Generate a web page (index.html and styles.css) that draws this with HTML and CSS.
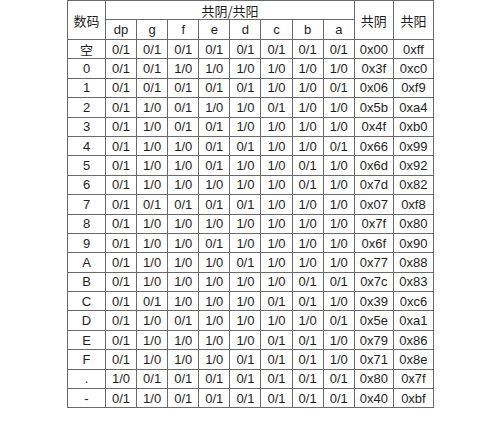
FILE: index.html
```
<!DOCTYPE html>
<html>
<head>
<meta charset="utf-8">
<link rel="stylesheet" href="styles.css">
</head>
<body>
<table class="seg">
<colgroup>
<col class="c-key"><col class="c-bit"><col class="c-bit"><col class="c-bit"><col class="c-bit"><col class="c-bit"><col class="c-bit"><col class="c-bit"><col class="c-bit"><col class="c-hex1"><col class="c-hex2">
</colgroup>
<thead>
<tr class="h1"><th rowspan="2">数码</th><th colspan="8">共阴/共阳</th><th rowspan="2">共阴</th><th rowspan="2">共阳</th></tr>
<tr class="h2"><th>dp</th><th>g</th><th>f</th><th>e</th><th>d</th><th>c</th><th>b</th><th>a</th></tr>
</thead>
<tbody>
<tr><td class="k">空</td><td>0/1</td><td>0/1</td><td>0/1</td><td>0/1</td><td>0/1</td><td>0/1</td><td>0/1</td><td>0/1</td><td>0x00</td><td>0xff</td></tr>
<tr><td>0</td><td>0/1</td><td>0/1</td><td>1/0</td><td>1/0</td><td>1/0</td><td>1/0</td><td>1/0</td><td>1/0</td><td>0x3f</td><td>0xc0</td></tr>
<tr><td>1</td><td>0/1</td><td>0/1</td><td>0/1</td><td>0/1</td><td>0/1</td><td>1/0</td><td>1/0</td><td>0/1</td><td>0x06</td><td>0xf9</td></tr>
<tr><td>2</td><td>0/1</td><td>1/0</td><td>0/1</td><td>1/0</td><td>1/0</td><td>0/1</td><td>1/0</td><td>1/0</td><td>0x5b</td><td>0xa4</td></tr>
<tr><td>3</td><td>0/1</td><td>1/0</td><td>0/1</td><td>0/1</td><td>1/0</td><td>1/0</td><td>1/0</td><td>1/0</td><td>0x4f</td><td>0xb0</td></tr>
<tr><td>4</td><td>0/1</td><td>1/0</td><td>1/0</td><td>0/1</td><td>0/1</td><td>1/0</td><td>1/0</td><td>0/1</td><td>0x66</td><td>0x99</td></tr>
<tr><td>5</td><td>0/1</td><td>1/0</td><td>1/0</td><td>0/1</td><td>1/0</td><td>1/0</td><td>0/1</td><td>1/0</td><td>0x6d</td><td>0x92</td></tr>
<tr><td>6</td><td>0/1</td><td>1/0</td><td>1/0</td><td>1/0</td><td>1/0</td><td>1/0</td><td>0/1</td><td>1/0</td><td>0x7d</td><td>0x82</td></tr>
<tr><td>7</td><td>0/1</td><td>0/1</td><td>0/1</td><td>0/1</td><td>0/1</td><td>1/0</td><td>1/0</td><td>1/0</td><td>0x07</td><td>0xf8</td></tr>
<tr><td>8</td><td>0/1</td><td>1/0</td><td>1/0</td><td>1/0</td><td>1/0</td><td>1/0</td><td>1/0</td><td>1/0</td><td>0x7f</td><td>0x80</td></tr>
<tr><td>9</td><td>0/1</td><td>1/0</td><td>1/0</td><td>0/1</td><td>1/0</td><td>1/0</td><td>1/0</td><td>1/0</td><td>0x6f</td><td>0x90</td></tr>
<tr><td>A</td><td>0/1</td><td>1/0</td><td>1/0</td><td>1/0</td><td>0/1</td><td>1/0</td><td>1/0</td><td>1/0</td><td>0x77</td><td>0x88</td></tr>
<tr><td>B</td><td>0/1</td><td>1/0</td><td>1/0</td><td>1/0</td><td>1/0</td><td>1/0</td><td>0/1</td><td>0/1</td><td>0x7c</td><td>0x83</td></tr>
<tr><td>C</td><td>0/1</td><td>0/1</td><td>1/0</td><td>1/0</td><td>1/0</td><td>0/1</td><td>0/1</td><td>1/0</td><td>0x39</td><td>0xc6</td></tr>
<tr><td>D</td><td>0/1</td><td>1/0</td><td>0/1</td><td>1/0</td><td>1/0</td><td>1/0</td><td>1/0</td><td>0/1</td><td>0x5e</td><td>0xa1</td></tr>
<tr><td>E</td><td>0/1</td><td>1/0</td><td>1/0</td><td>1/0</td><td>1/0</td><td>0/1</td><td>0/1</td><td>1/0</td><td>0x79</td><td>0x86</td></tr>
<tr><td>F</td><td>0/1</td><td>1/0</td><td>1/0</td><td>1/0</td><td>0/1</td><td>0/1</td><td>0/1</td><td>1/0</td><td>0x71</td><td>0x8e</td></tr>
<tr><td>.</td><td>1/0</td><td>0/1</td><td>0/1</td><td>0/1</td><td>0/1</td><td>0/1</td><td>0/1</td><td>0/1</td><td>0x80</td><td>0x7f</td></tr>
<tr><td>-</td><td>0/1</td><td>1/0</td><td>0/1</td><td>0/1</td><td>0/1</td><td>0/1</td><td>0/1</td><td>0/1</td><td>0x40</td><td>0xbf</td></tr>
</tbody>
</table>
</body>
</html>
```
FILE: styles.css
```
html, body {
  margin: 0;
  padding: 0;
  background: #fff;
}
body {
  padding-left: 67px;
}
.seg {
  border-collapse: collapse;
  table-layout: fixed;
  width: 367px;
  font-family: "Liberation Sans", "Noto Sans CJK SC", sans-serif;
  font-size: 13px;
  color: #1e1e1e;
}
.c-key { width: 38px; }
.c-bit { width: 31.1px; }
.c-hex1 { width: 39px; }
.c-hex2 { width: 40px; }
.seg th, .seg td {
  border: 1px solid #6a6a6a;
  padding: 0;
  text-align: center;
  vertical-align: middle;
  font-weight: normal;
  line-height: 15px;
}
.seg th {
  font-family: "Noto Sans CJK SC", sans-serif;
  font-size: 13px;
}
.seg .h2 th {
  font-family: "Liberation Sans", sans-serif;
  font-size: 13px;
}
.seg .h1 { height: 19px; }
.seg .h2 { height: 20px; }
.seg tbody tr { height: 19.4px; }
.seg td.k {
  font-family: "Noto Sans CJK SC", sans-serif;
}
```
